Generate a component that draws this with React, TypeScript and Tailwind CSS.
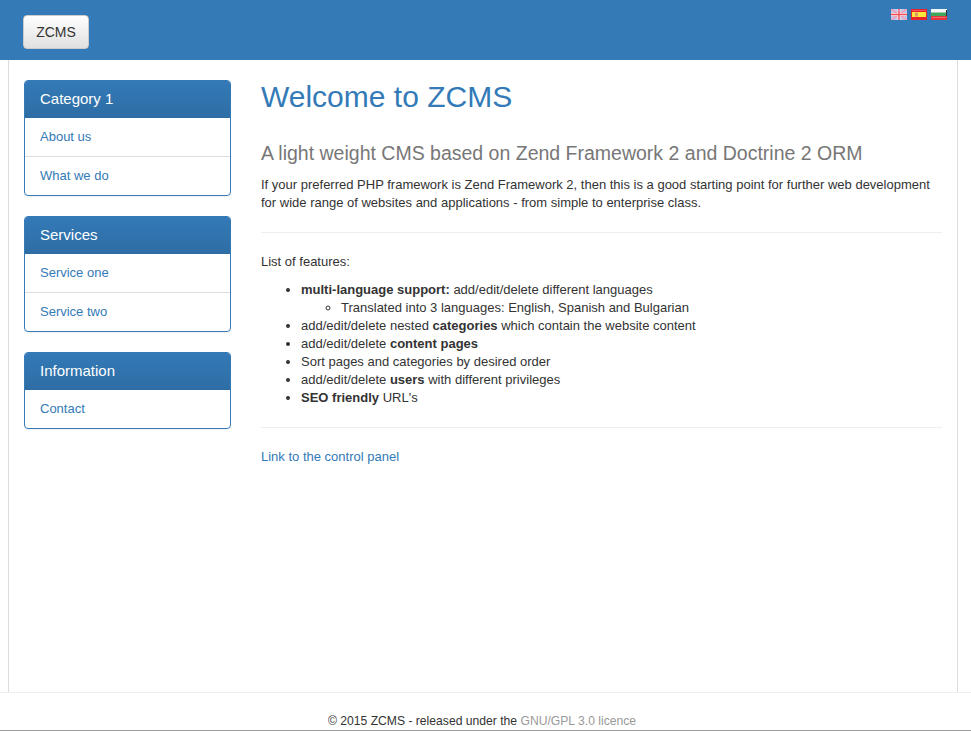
import React from 'react';

const MENUS = [
  { title: 'Category 1', links: ['About us', 'What we do'] },
  { title: 'Services', links: ['Service one', 'Service two'] },
  { title: 'Information', links: ['Contact'] },
];

const UkFlag = () => (
  <svg width="16" height="11" viewBox="0 0 16 11" className="block">
    <rect width="16" height="11" fill="#c4c8ec" />
    <path d="M0 0L16 11M16 0L0 11" stroke="#f0a0b0" strokeWidth="1.5" />
    <path d="M8 0V11M0 5.5H16" stroke="#f8e8ea" strokeWidth="3" />
    <path d="M8 0V11M0 5.5H16" stroke="#f0505c" strokeWidth="1.4" />
  </svg>
);

const EsFlag = () => (
  <svg width="16" height="11" viewBox="0 0 16 11" className="block">
    <rect width="16" height="11" fill="#e8222c" />
    <rect x="1" y="3" width="14" height="5" fill="#fbe83a" />
    <rect x="4" y="3.5" width="3" height="4" fill="#e09a6a" />
    <rect x="1" y="1" width="14" height="1" fill="#f4505a" />
  </svg>
);

const BgFlag = () => (
  <svg width="16" height="11" viewBox="0 0 16 11" className="block">
    <rect width="16" height="4" fill="#f6f6f6" />
    <rect y="3.5" width="16" height="3.5" fill="#3fa65c" />
    <rect y="7" width="16" height="4" fill="#e8323c" />
    <rect y="8" x="1" width="14" height="1" fill="#f26a6a" />
    <rect x="15" y="1" width="1" height="6" fill="#333" />
  </svg>
);

export default function App() {
  return (
    <div className="min-h-[731px] flex flex-col bg-white text-[13px] leading-[18px] text-[#333] font-['Liberation_Sans',Arial,sans-serif]">
      <header className="h-[60px] bg-[#337ab7] flex justify-between pl-[23px] pr-6">
        <button className="mt-[15px] h-[34px] w-[66px] rounded border border-[#ccc] bg-gradient-to-b from-white to-[#e0e0e0] text-[#333] text-[14px]">
          ZCMS
        </button>
        <div className="flex gap-[4px] mt-[9px] h-[11px]">
          <UkFlag />
          <EsFlag />
          <BgFlag />
        </div>
      </header>

      <div className="h-[632px] ml-2 mr-[13px] border-x border-[#ddd] flex px-[15px] pt-5">
        <aside className="w-[207px] shrink-0 flex flex-col gap-5">
          {MENUS.map((menu) => (
            <div key={menu.title} className="rounded border border-[#337ab7] overflow-hidden shadow-[0_1px_1px_rgba(0,0,0,0.05)]">
              <div className="h-[37px] px-[15px] pb-px flex items-center bg-gradient-to-b from-[#337ab7] to-[#2e6da4] text-white text-[15px]">
                {menu.title}
              </div>
              {menu.links.map((link, i) => (
                <a key={link} className={`px-[15px] pb-px flex items-center text-[#337ab7] ${i > 0 ? 'h-[39px] border-t border-[#ddd]' : 'h-[38px]'}`}>
                  {link}
                </a>
              ))}
            </div>
          ))}
        </aside>

        <main className="ml-[30px] flex-1">
          <h1 className="text-[30px] leading-[33px] text-[#337ab7]">Welcome to ZCMS</h1>
          <h3 className="text-[19.5px] leading-[22px] text-[#777] mt-[29px]">A light weight CMS based on Zend Framework 2 and Doctrine 2 ORM</h3>
          <p className="mt-3">
            If your preferred PHP framework is Zend Framework 2, then this is a good starting point for further web development
            for wide range of websites and applications - from simple to enterprise class.
          </p>
          <hr className="mt-5 mb-5 border-t border-[#eee]" />
          <p>List of features:</p>
          <ul className="mt-[10px] pl-10 list-disc">
            <li>
              <b>multi-language support:</b> add/edit/delete different languages
              <ul className="pl-10 list-[circle]">
                <li>Translated into 3 languages: English, Spanish and Bulgarian</li>
              </ul>
            </li>
            <li>add/edit/delete nested <b>categories</b> which contain the website content</li>
            <li>add/edit/delete <b>content pages</b></li>
            <li>Sort pages and categories by desired order</li>
            <li>add/edit/delete <b>users</b> with different privileges</li>
            <li><b>SEO friendly</b> URL's</li>
          </ul>
          <hr className="mt-5 mb-5 border-t border-[#eee]" />
          <a className="text-[#337ab7]">Link to the control panel</a>
        </main>
      </div>

      <footer className="h-[39px] pr-[7px] border-t border-[#eee] border-b border-b-[#999] text-center pt-[18px] text-[12.15px] leading-[20px]">
        © 2015 ZCMS - released under the <a className="text-[#999]">GNU/GPL 3.0 licence</a>
      </footer>
    </div>
  );
}
